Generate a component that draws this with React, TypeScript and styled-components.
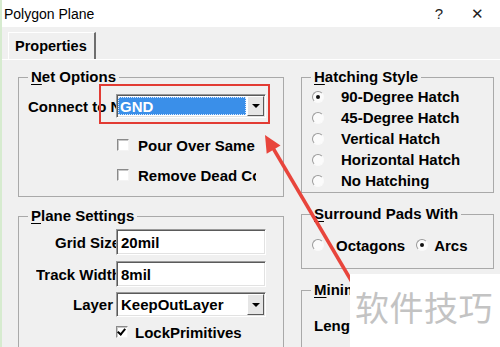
import React from 'react';
import styled, { createGlobalStyle } from 'styled-components';

const GlobalStyle = createGlobalStyle`
  html, body {
    margin: 0;
    padding: 0;
    width: 500px;
    height: 347px;
    overflow: hidden;
    background: #f0f0f0;
  }
  body {
    font-family: "Liberation Sans", Arial, sans-serif;
    color: #000;
  }
`;

const Window = styled.div`
  position: relative;
  width: 500px;
  height: 347px;
  overflow: hidden;
  box-sizing: border-box;
  padding-left: 2px;
  background: linear-gradient(to right, #d6ebcf 2px, #f0f0f0 2px);
  display: flex;
  flex-direction: column;
`;

const TitleBar = styled.div`
  height: 27px;
  flex: none;
  background: #fff;
  display: flex;
  align-items: center;
  padding-right: 4px;
  font-size: 14px;
`;

const Title = styled.div`
  flex: 1;
  padding-left: 2px;
`;

const TitleButton = styled.div`
  width: 38px;
  text-align: center;
  font-size: 15px;
  color: #222;
`;

const TabStrip = styled.div`
  flex: none;
  display: flex;
  align-items: flex-end;
  padding: 5px 0 0 6px;
`;

const Tab = styled.div`
  height: 27px;
  box-sizing: border-box;
  display: flex;
  align-items: center;
  padding: 0 7px 0 6px;
  border-top: 1px solid #fff;
  border-left: 1px solid #fff;
  border-right: 2px solid #6e6e6e;
  font-size: 14.5px;
  font-weight: bold;
`;

const Panel = styled.div`
  flex: 1;
  display: flex;
  gap: 17px;
  padding: 9px 0 0 16px;
  border-top: 1px solid #fff;
`;

const Column = styled.div<{ $w: number }>`
  width: ${({ $w }) => $w}px;
  flex: none;
  display: flex;
  flex-direction: column;
`;

const Group = styled.fieldset<{ $mt?: number }>`
  margin: ${({ $mt }) => $mt || 0}px 0 0 0;
  padding: 0;
  border: 1px solid #a9a9a9;
  min-width: 0;
`;

const Legend = styled.legend`
  margin-left: 9px;
  padding: 0 3px;
  font-size: 15px;
  font-weight: bold;
  line-height: 16px;
  white-space: nowrap;
`;

const GroupBody = styled.div<{ $pt: number; $pb: number; $pl: number }>`
  padding: ${({ $pt }) => $pt}px 0 ${({ $pb }) => $pb}px ${({ $pl }) => $pl}px;
`;

const Key = styled.span`
  text-decoration: underline;
  text-underline-offset: 2px;
`;

const FieldRow = styled.div<{ $h: number; $mt?: number }>`
  display: flex;
  align-items: center;
  height: ${({ $h }) => $h}px;
  margin-top: ${({ $mt }) => $mt || 0}px;
`;

const LabelCell = styled.div`
  width: 88px;
  flex: none;
  display: flex;
  justify-content: flex-end;
`;

const Label = styled.span<{ $w: number; $pr?: number }>`
  width: ${({ $w }) => $w}px;
  box-sizing: border-box;
  padding-right: ${({ $pr }) => $pr || 0}px;
  text-align: right;
  white-space: nowrap;
  overflow: hidden;
  font-size: 15px;
  font-weight: bold;
`;

const Sunken = styled.div<{ $h: number }>`
  width: 150px;
  height: ${({ $h }) => $h}px;
  box-sizing: border-box;
  border: 1px solid;
  border-color: #9a9a9a #fff #fff #9a9a9a;
  box-shadow: inset 1px 1px 0 #5a5a5a, inset -1px -1px 0 #e2e2e2;
  background: #fff;
  display: flex;
  align-items: stretch;
  padding: 1px;
`;

const FieldText = styled.div`
  flex: 1;
  display: flex;
  align-items: center;
  padding-left: 3px;
  font-size: 15px;
  font-weight: bold;
  white-space: nowrap;
  overflow: hidden;
`;

const Selected = styled(FieldText)`
  margin: 1px 1px 1px 0;
  padding-left: 2px;
  background: #3a8fe9;
  color: #fff;
  outline: 1px dotted #d8e8ff;
  outline-offset: -1px;
`;

const DropButton = styled.div`
  width: 17px;
  flex: none;
  box-sizing: border-box;
  background: #e6e6e6;
  border: 1px solid;
  border-color: #fff #5a5a5a #5a5a5a #fff;
  display: flex;
  align-items: center;
  justify-content: center;

  &::after {
    content: '';
    border-left: 4px solid transparent;
    border-right: 4px solid transparent;
    border-top: 4px solid #000;
  }
`;

const CheckRow = styled.div<{ $h: number; $mt: number; $ml: number; $gap: number }>`
  display: flex;
  align-items: center;
  gap: ${({ $gap }) => $gap}px;
  height: ${({ $h }) => $h}px;
  margin-top: ${({ $mt }) => $mt}px;
  margin-left: ${({ $ml }) => $ml}px;
`;

const CheckText = styled.span<{ $w?: number }>`
  font-size: 15px;
  font-weight: bold;
  white-space: nowrap;
  overflow: hidden;
  ${({ $w }) => ($w ? `width: ${$w}px;` : '')}
`;

const CheckBox = styled.div<{ $on?: boolean }>`
  width: 12px;
  height: 12px;
  flex: none;
  box-sizing: border-box;
  background: #fff;
  border: 1px solid;
  border-color: #8a8a8a #f4f4f4 #f4f4f4 #8a8a8a;
  box-shadow: inset 1px 1px 0 #c8c8c8;
  position: relative;

  ${({ $on }) =>
    $on &&
    `&::after {
      content: '';
      position: absolute;
      left: 2px;
      top: 0px;
      width: 3px;
      height: 6px;
      border-right: 2px solid #000;
      border-bottom: 2px solid #000;
      transform: rotate(40deg);
    }`}
`;

const RadioRow = styled.div<{ $h: number }>`
  display: flex;
  align-items: center;
  height: ${({ $h }) => $h}px;
  font-size: 15px;
  font-weight: bold;
  white-space: nowrap;
`;

const RadioOption = styled.div<{ $gap: number; $ml?: number }>`
  display: flex;
  align-items: center;
  gap: ${({ $gap }) => $gap}px;
  margin-left: ${({ $ml }) => $ml || 0}px;
`;

const Radio = styled.div<{ $on?: boolean }>`
  width: 12px;
  height: 12px;
  flex: none;
  box-sizing: border-box;
  border-radius: 50%;
  border: 1px solid;
  border-color: #9a9a9a #fafafa #fafafa #9a9a9a;
  background: #fbfbfb;
  display: flex;
  align-items: center;
  justify-content: center;

  &::after {
    content: '';
    width: 4px;
    height: 4px;
    border-radius: 50%;
    background: ${({ $on }) => ($on ? '#111' : 'transparent')};
  }
`;

const PlainRow = styled.div<{ $h: number }>`
  height: ${({ $h }) => $h}px;
  display: flex;
  align-items: center;
  font-size: 15px;
  font-weight: bold;
  white-space: nowrap;
`;

const Highlight = styled.div`
  position: absolute;
  left: 99px;
  top: 84px;
  width: 171px;
  height: 40px;
  box-sizing: border-box;
  border: 2px solid #e23b33;
`;

const Overlay = styled.svg`
  position: absolute;
  left: 0;
  top: 0;
`;

const Watermark = styled.div`
  position: absolute;
  left: 350px;
  top: 274px;
  right: 0;
  bottom: 0;
  background: #fff;
  display: flex;
  align-items: center;
  padding: 0 0 8px 5px;
  box-sizing: border-box;
  font-family: "Noto Sans CJK SC", "Noto Sans", sans-serif;
  font-size: 34px;
  letter-spacing: 0.5px;
  color: #c3c3c3;
`;

const hatching = [
  { label: '90-Degree Hatch', on: true },
  { label: '45-Degree Hatch' },
  { label: 'Vertical Hatch' },
  { label: 'Horizontal Hatch' },
  { label: 'No Hatching' },
];

export default function App(): JSX.Element {
  return (
    <>
      <GlobalStyle />
      <Window>
        <TitleBar>
          <Title>Polygon Plane</Title>
          <TitleButton>?</TitleButton>
          <TitleButton>✕</TitleButton>
        </TitleBar>
        <TabStrip>
          <Tab>Properties</Tab>
        </TabStrip>
        <Panel>
          <Column $w={266}>
            <Group>
              <Legend><Key>N</Key>et Options</Legend>
              <GroupBody $pt={9} $pb={11} $pl={9}>
                <FieldRow $h={24}>
                  <LabelCell><Label $w={88}>Connect to Net</Label></LabelCell>
                  <Sunken $h={24}>
                    <Selected>GND</Selected>
                    <DropButton />
                  </Sunken>
                </FieldRow>
                <CheckRow $h={20} $mt={17} $ml={89} $gap={9}>
                  <CheckBox />
                  <CheckText $w={118}>Pour Over Same Net</CheckText>
                </CheckRow>
                <CheckRow $h={20} $mt={10} $ml={89} $gap={9}>
                  <CheckBox />
                  <CheckText $w={118}>Remove Dead Copper</CheckText>
                </CheckRow>
              </GroupBody>
            </Group>
            <Group $mt={11}>
              <Legend><Key>P</Key>lane Settings</Legend>
              <GroupBody $pt={5} $pb={40} $pl={9}>
                <FieldRow $h={26}>
                  <LabelCell><Label $w={61}>Grid Size</Label></LabelCell>
                  <Sunken $h={26}><FieldText>20mil</FieldText></Sunken>
                </FieldRow>
                <FieldRow $h={26} $mt={6}>
                  <LabelCell><Label $w={80}>Track Width</Label></LabelCell>
                  <Sunken $h={26}><FieldText>8mil</FieldText></Sunken>
                </FieldRow>
                <FieldRow $h={25} $mt={5}>
                  <LabelCell><Label $w={80} $pr={3}>Layer</Label></LabelCell>
                  <Sunken $h={25}>
                    <FieldText>KeepOutLayer</FieldText>
                    <DropButton />
                  </Sunken>
                </FieldRow>
                <CheckRow $h={18} $mt={6} $ml={88} $gap={7}>
                  <CheckBox $on />
                  <CheckText>LockPrimitives</CheckText>
                </CheckRow>
              </GroupBody>
            </Group>
          </Column>
          <Column $w={193}>
            <Group>
              <Legend><Key>H</Key>atching Style</Legend>
              <GroupBody $pt={1} $pb={1} $pl={10}>
                {hatching.map((h) => (
                  <RadioRow key={h.label} $h={21}>
                    <RadioOption $gap={17}>
                      <Radio $on={h.on} />
                      {h.label}
                    </RadioOption>
                  </RadioRow>
                ))}
              </GroupBody>
            </Group>
            <Group $mt={13}>
              <Legend><Key>S</Key>urround Pads With</Legend>
              <GroupBody $pt={13} $pb={13} $pl={10}>
                <RadioRow $h={20}>
                  <RadioOption $gap={12}>
                    <Radio />Octagons
                  </RadioOption>
                  <RadioOption $gap={6} $ml={11}>
                    <Radio $on />Arcs
                  </RadioOption>
                </RadioRow>
              </GroupBody>
            </Group>
            <Group $mt={13}>
              <Legend><Key>M</Key>inimum Primitive Length</Legend>
              <GroupBody $pt={17} $pb={30} $pl={12}>
                <PlainRow $h={20}>Length</PlainRow>
              </GroupBody>
            </Group>
          </Column>
        </Panel>

        <Highlight />
        <Overlay width="500" height="347" viewBox="0 0 500 347">
          <line x1="352" y1="282" x2="273" y2="148" stroke="#e8453c" strokeWidth="3.5" />
          <polygon points="265,135 266.7,153.8 280.5,145.6" fill="#e8453c" />
        </Overlay>
        <Watermark>软件技巧</Watermark>
      </Window>
    </>
  );
}
